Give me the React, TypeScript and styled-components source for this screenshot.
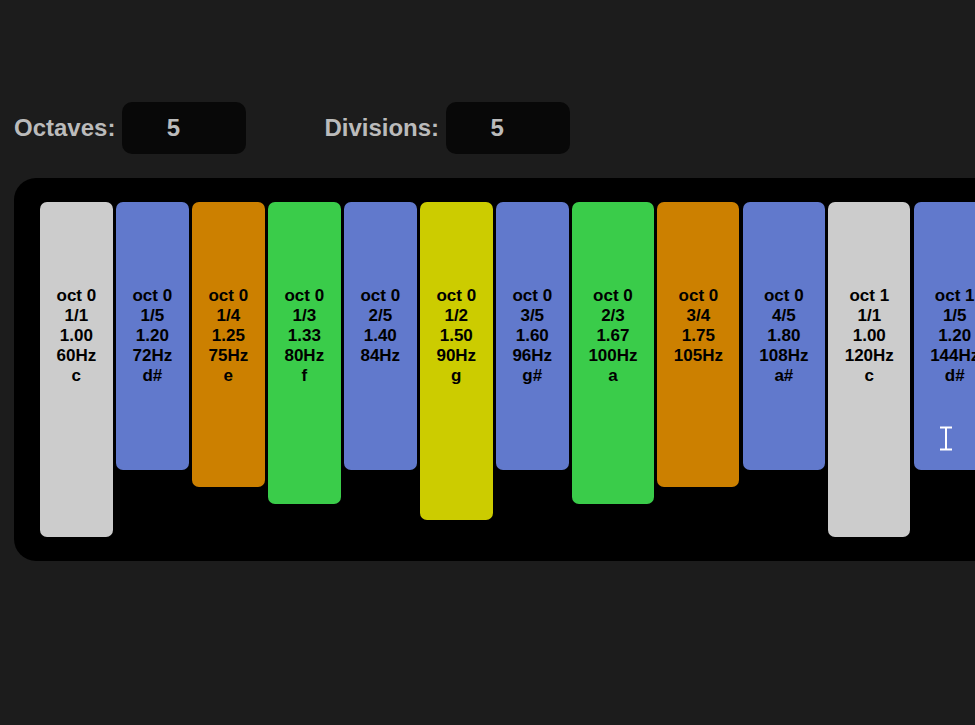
import React from "react";
import styled, { createGlobalStyle } from "styled-components";

const Global = createGlobalStyle`
  html, body {
    margin: 0;
    padding: 0;
    background: #1c1c1c;
    overflow: hidden;
    font-family: "Liberation Sans", Arial, sans-serif;
  }
`;

const Page = styled.div`
  position: relative;
  width: 975px;
  height: 725px;
  padding: 102px 0 0 14px;
  box-sizing: border-box;
`;

const Controls = styled.div`
  display: flex;
  align-items: center;
  height: 52px;
`;

const Field = styled.label`
  display: flex;
  align-items: center;
  gap: 7px;
  margin-right: 78px;
`;

const Label = styled.span`
  font-size: 24px;
  font-weight: bold;
  color: #bbbbbb;
`;

const NumberBox = styled.input`
  width: 124px;
  height: 52px;
  box-sizing: border-box;
  border: none;
  outline: none;
  border-radius: 10px;
  background: #080808;
  color: #bbbbbb;
  font-family: "Liberation Sans", Arial, sans-serif;
  font-size: 24px;
  font-weight: bold;
  text-align: center;
  padding: 0 22px 0 0;
`;

const Panel = styled.div`
  display: flex;
  align-items: flex-start;
  gap: 3.3px;
  width: max-content;
  margin-top: 24px;
  padding: 24px 26px;
  background: #000;
  border-radius: 22px;
`;

const Key = styled.div<{ $color: string; $h: number }>`
  background: ${(p) => p.$color};
  height: ${(p) => p.$h}px;
  padding: 84px 16.5px 0;
  box-sizing: border-box;
  border-radius: 7px;
  color: #000;
  font-size: 17px;
  font-weight: bold;
  line-height: 20px;
  text-align: center;
  white-space: nowrap;
`;

const Line = styled.div``;

const Cursor = styled.svg`
  position: absolute;
  left: 939px;
  top: 426px;
`;

const GRAY = "#cccccc";
const BLUE = "#6179cc";
const ORANGE = "#cc8000";
const GREEN = "#3acc4a";
const YELLOW = "#cccc00";

type K = { lines: string[]; color: string; h: number };

const keys: K[] = [
  { lines: ["oct 0", "1/1", "1.00", "60Hz", "c"], color: GRAY, h: 335 },
  { lines: ["oct 0", "1/5", "1.20", "72Hz", "d#"], color: BLUE, h: 268 },
  { lines: ["oct 0", "1/4", "1.25", "75Hz", "e"], color: ORANGE, h: 285 },
  { lines: ["oct 0", "1/3", "1.33", "80Hz", "f"], color: GREEN, h: 302 },
  { lines: ["oct 0", "2/5", "1.40", "84Hz"], color: BLUE, h: 268 },
  { lines: ["oct 0", "1/2", "1.50", "90Hz", "g"], color: YELLOW, h: 318 },
  { lines: ["oct 0", "3/5", "1.60", "96Hz", "g#"], color: BLUE, h: 268 },
  { lines: ["oct 0", "2/3", "1.67", "100Hz", "a"], color: GREEN, h: 302 },
  { lines: ["oct 0", "3/4", "1.75", "105Hz"], color: ORANGE, h: 285 },
  { lines: ["oct 0", "4/5", "1.80", "108Hz", "a#"], color: BLUE, h: 268 },
  { lines: ["oct 1", "1/1", "1.00", "120Hz", "c"], color: GRAY, h: 335 },
  { lines: ["oct 1", "1/5", "1.20", "144Hz", "d#"], color: BLUE, h: 268 },
  { lines: ["oct 1", "1/4", "1.25", "150Hz", "e"], color: ORANGE, h: 285 },
];

export default function App() {
  return (
    <>
      <Global />
      <Page>
        <Controls>
          <Field>
            <Label>Octaves:</Label>
            <NumberBox defaultValue="5" />
          </Field>
          <Field>
            <Label>Divisions:</Label>
            <NumberBox defaultValue="5" />
          </Field>
        </Controls>
        <Panel>
          {keys.map((k, i) => (
            <Key key={i} $color={k.color} $h={k.h}>
              {k.lines.map((l, j) => (
                <Line key={j}>{l}</Line>
              ))}
            </Key>
          ))}
        </Panel>
        <Cursor width="14" height="25" viewBox="0 0 14 25">
          <path d="M1 1.5h12M7 1.5v22M1 23.5h12" stroke="#ffffff" strokeWidth="2" fill="none" />
        </Cursor>
      </Page>
    </>
  );
}
